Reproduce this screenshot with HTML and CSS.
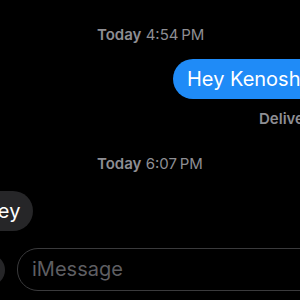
FILE: index.html
```html
<!DOCTYPE html>
<html>
<head>
<meta charset="utf-8">
<link rel="stylesheet" href="styles.css">
</head>
<body>
<div class="screen">
  <div class="stamp stamp-first"><b>Today</b> 4:54&#8201;PM</div>
  <div class="row row-out">
    <div class="bubble bubble-out">Hey Kenosha</div>
  </div>
  <div class="status">Delivered</div>
  <div class="stamp stamp-second"><b>Today</b> 6:07&#8201;PM</div>
  <div class="row row-in">
    <div class="bubble bubble-in">Hey</div>
  </div>
  <div class="composer">
    <div class="apps-btn"></div>
    <div class="field">iMessage</div>
  </div>
</div>
</body>
</html>
```
FILE: styles.css
```css
html, body {
  margin: 0;
  padding: 0;
  background: #000;
}
body {
  width: 300px;
  height: 300px;
  overflow: hidden;
  font-family: Inter, "Noto Sans", sans-serif;
}
.screen {
  display: flex;
  flex-direction: column;
  width: 300px;
}
.stamp {
  font-size: 15px;
  line-height: 18px;
  color: #8e8e93;
  padding-left: 97px;
  white-space: nowrap;
}
.stamp b {
  font-weight: 600;
}
.stamp-first {
  margin-top: 26px;
}
.row {
  display: flex;
  white-space: nowrap;
}
.row-out {
  margin-top: 15px;
  padding-left: 173px;
}
.bubble {
  height: 40px;
  border-radius: 20px;
  font-size: 20px;
  line-height: 40px;
  white-space: nowrap;
  flex: none;
}
.bubble-out {
  background: #1f8bf7;
  color: #fff;
  padding: 0 16px 0 14px;
}
.status {
  margin-top: 11px;
  padding-left: 259px;
  font-size: 15px;
  line-height: 18px;
  font-weight: 600;
  color: #8e8e93;
  white-space: nowrap;
}
.stamp-second {
  margin-top: 27px;
}
.row-in {
  margin-top: 18px;
}
.bubble-in {
  background: #262628;
  color: #fff;
  margin-left: -31px;
  padding: 0 13px 0 14px;
}
.composer {
  display: flex;
  align-items: center;
  margin-top: 17px;
  gap: 12px;
}
.apps-btn {
  flex: none;
  width: 32px;
  height: 32px;
  border-radius: 50%;
  background: #262628;
  margin-left: -27px;
}
.field {
  flex: none;
  box-sizing: border-box;
  width: 320px;
  height: 43px;
  border: 1px solid #3a3a3c;
  border-radius: 21px;
  padding-left: 14px;
  font-size: 20px;
  line-height: 41px;
  color: #5e5e62;
}
```
